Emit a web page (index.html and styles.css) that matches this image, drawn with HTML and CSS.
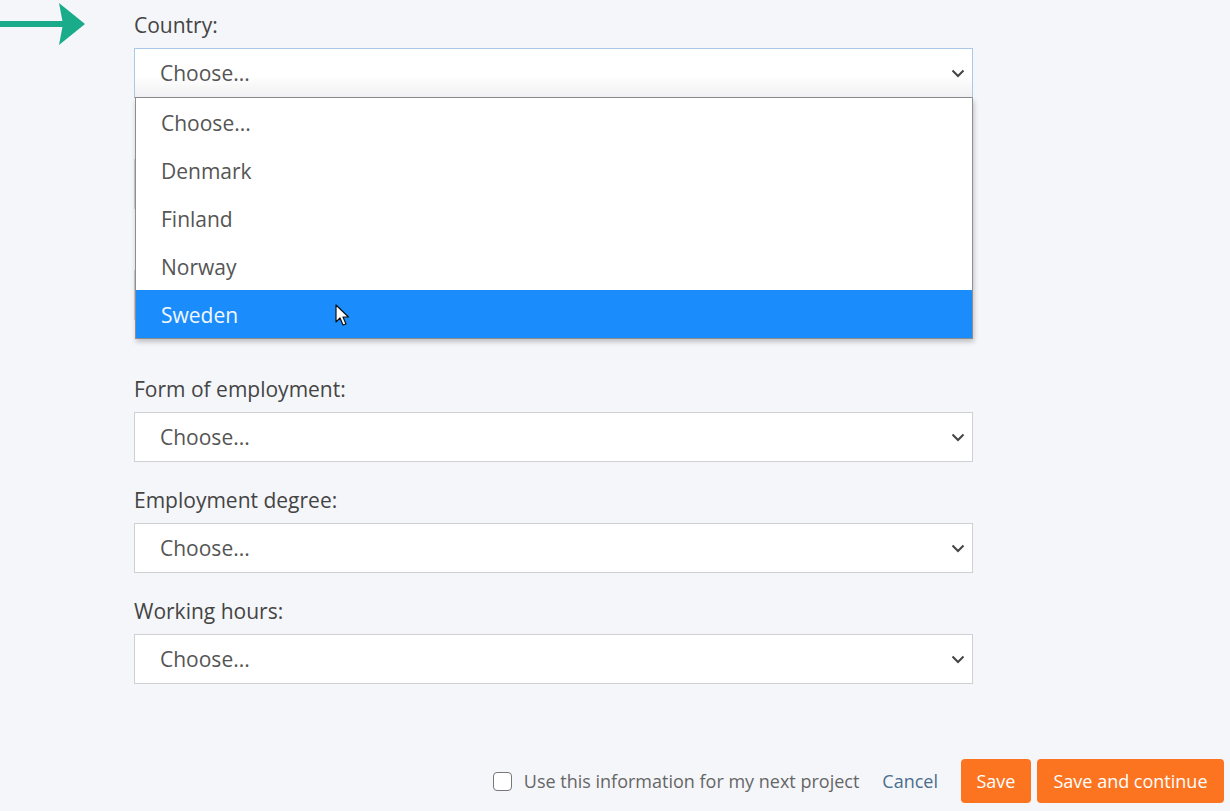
FILE: index.html
```html
<!DOCTYPE html>
<html lang="en">
<head>
	<meta charset="UTF-8">
	<title>Employment</title>
	<link rel="stylesheet" href="styles.css">
</head>
<body>
	<svg class="arrow" width="90" height="50" viewBox="0 0 90 50">
		<rect x="0" y="21" width="64" height="6" fill="#1aab8b"/>
		<polygon points="59,3 85,24 59,45 63,24" fill="#1aab8b"/>
	</svg>
	<div class="form">
		<div class="group country">
			<div class="label">Country:</div>
			<div class="select open">
				<span>Choose...</span>
				<svg class="chev" width="14" height="9" viewBox="0 0 14 9"><path d="M1.5 1.5 L7 7 L12.5 1.5" fill="none" stroke="#444" stroke-width="2"/></svg>
			</div>
			<ul class="list">
				<li>Choose...</li>
				<li>Denmark</li>
				<li>Finland</li>
				<li>Norway</li>
				<li class="active">Sweden</li>
			</ul>
			<svg class="cursor" width="16" height="24" viewBox="0 0 16 24">
				<path d="M1 1 L1 18 L5 14 L8 21 L11 20 L8 13 L13.5 13 Z" fill="#fff" stroke="#111" stroke-width="1.2" stroke-linejoin="round"/>
			</svg>
		</div>
		<!-- fields covered by the open list -->
		<div class="group">
			<div class="label"></div>
			<div class="select"></div>
		</div>
		<div class="group tall">
			<div class="label"></div>
			<div class="select"></div>
		</div>
		<div class="group">
			<div class="label">Form of employment:</div>
			<div class="select">
				<span>Choose...</span>
				<svg class="chev" width="14" height="9" viewBox="0 0 14 9"><path d="M1.5 1.5 L7 7 L12.5 1.5" fill="none" stroke="#444" stroke-width="2"/></svg>
			</div>
		</div>
		<div class="group">
			<div class="label">Employment degree:</div>
			<div class="select">
				<span>Choose...</span>
				<svg class="chev" width="14" height="9" viewBox="0 0 14 9"><path d="M1.5 1.5 L7 7 L12.5 1.5" fill="none" stroke="#444" stroke-width="2"/></svg>
			</div>
		</div>
		<div class="group">
			<div class="label">Working hours:</div>
			<div class="select">
				<span>Choose...</span>
				<svg class="chev" width="14" height="9" viewBox="0 0 14 9"><path d="M1.5 1.5 L7 7 L12.5 1.5" fill="none" stroke="#444" stroke-width="2"/></svg>
			</div>
		</div>
	</div>
	<div class="footer">
		<label class="check"><span class="box"></span>Use this information for my next project</label>
		<a class="cancel">Cancel</a>
		<button class="btn save">Save</button>
		<button class="btn next">Save and continue</button>
	</div>
</body>
</html>
```

FILE: styles.css
```css
*{
	margin: 0;
	padding: 0;
	list-style: none;
	box-sizing: border-box;
}
body{
	background: #f5f6fa;
	font-family: "Open Sans", "Liberation Sans", sans-serif;
	color: #444;
	width: 1230px;
	height: 811px;
	overflow: hidden;
	position: relative;
}
.arrow{
	position: absolute;
	left: 0;
	top: 0;
}
.form{
	width: 839px;
	margin-left: 134px;
	padding-top: 13px;
}
.group{
	margin-bottom: 26px;
	position: relative;
}
.group.tall{
	margin-bottom: 57px;
}
.label{
	font-size: 21px;
	line-height: 24px;
	height: 24px;
	margin-bottom: 11px;
	color: #444;
}
.select{
	height: 50px;
	background: #fff;
	border: 1px solid #cfcfd4;
	display: flex;
	align-items: center;
	justify-content: space-between;
	padding: 0 7px 0 25px;
	font-size: 21px;
	color: #555;
}
.select.open{
	border-color: #a9c9e8;
	background: linear-gradient(#fff 55%, #f1f1f3);
	border-bottom-color: #8d8d8d;
}
.chev{
	display: block;
}
.list{
	position: absolute;
	top: 85px;
	left: 1px;
	width: 838px;
	background: #fff;
	border: 1px solid #8e8e8e;
	border-top: none;
	box-shadow: 1px 3px 5px rgba(0,0,0,0.22);
	z-index: 2;
}
.list li{
	height: 48px;
	line-height: 50px;
	padding-left: 25px;
	font-size: 21px;
	color: #555;
}
.list .active{
	background: #1b8cfb;
	color: #f2f8ff;
}
.cursor{
	position: absolute;
	left: 201px;
	top: 291px;
	z-index: 3;
}
.footer{
	display: flex;
	justify-content: flex-end;
	align-items: center;
	padding-right: 6px;
	margin-top: 75px;
	height: 44px;
}
.check{
	display: flex;
	align-items: center;
	font-size: 18px;
	color: #666;
	margin-right: 23px;
}
.box{
	width: 19px;
	height: 19px;
	border: 1.5px solid #777;
	border-radius: 4px;
	background: #fff;
	margin-right: 12px;
}
.cancel{
	font-size: 18px;
	color: #4a6e8e;
	margin-right: 23px;
}
.btn{
	height: 44px;
	border: none;
	border-radius: 4px;
	background: #fd7420;
	color: #fff;
	font-family: "Open Sans", "Liberation Sans", sans-serif;
	font-size: 18px;
}
.save{
	width: 70px;
	margin-right: 6px;
}
.next{
	width: 187px;
}
```
